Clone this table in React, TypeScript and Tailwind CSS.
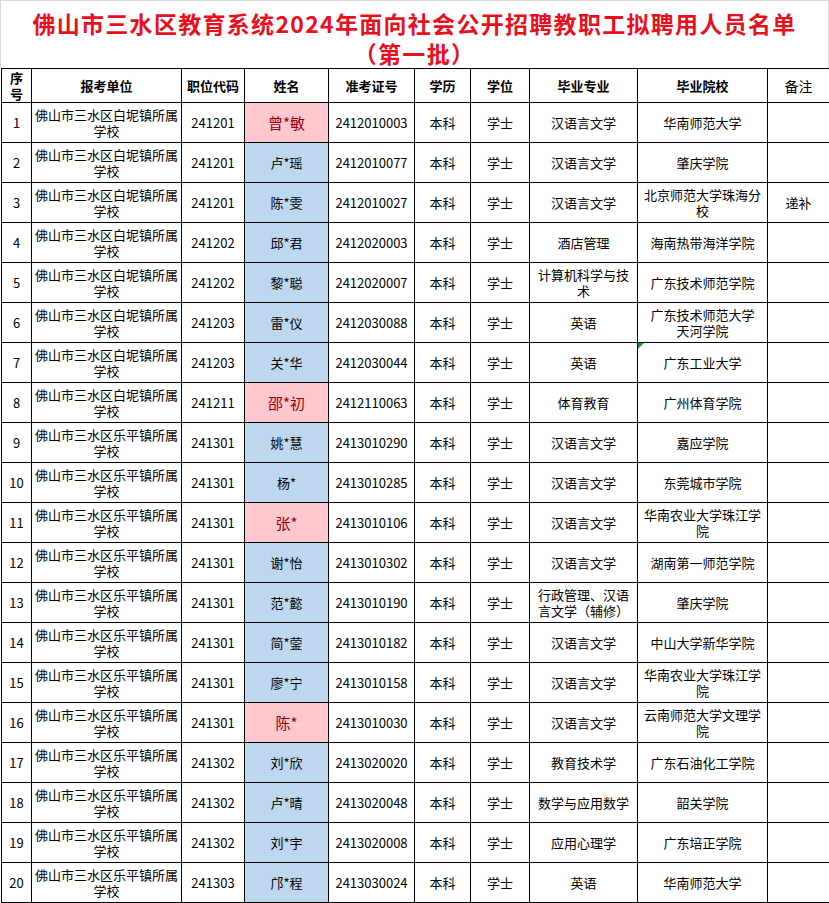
import React from 'react';

type Row = {
  no: number;
  unit: string;
  code: string;
  name: string;
  hit?: boolean;
  ticket: string;
  major: React.ReactNode;
  school: React.ReactNode;
  note?: string;
  flag?: boolean;
};

const BJ = '佛山市三水区白坭镇所属学校';
const LP = '佛山市三水区乐平镇所属学校';

const rows: Row[] = [
  { no: 1, unit: BJ, code: '241201', name: '曾*敏', hit: true, ticket: '2412010003', major: '汉语言文学', school: '华南师范大学' },
  { no: 2, unit: BJ, code: '241201', name: '卢*瑶', ticket: '2412010077', major: '汉语言文学', school: '肇庆学院' },
  { no: 3, unit: BJ, code: '241201', name: '陈*雯', ticket: '2412010027', major: '汉语言文学', school: '北京师范大学珠海分校', note: '递补' },
  { no: 4, unit: BJ, code: '241202', name: '邱*君', ticket: '2412020003', major: '酒店管理', school: '海南热带海洋学院' },
  { no: 5, unit: BJ, code: '241202', name: '黎*聪', ticket: '2412020007', major: '计算机科学与技术', school: '广东技术师范学院' },
  {
    no: 6, unit: BJ, code: '241203', name: '雷*仪', ticket: '2412030088', major: '英语',
    school: (<>广东技术师范大学<br />天河学院</>),
  },
  { no: 7, unit: BJ, code: '241203', name: '关*华', ticket: '2412030044', major: '英语', school: '广东工业大学', flag: true },
  { no: 8, unit: BJ, code: '241211', name: '邵*初', hit: true, ticket: '2412110063', major: '体育教育', school: '广州体育学院' },
  { no: 9, unit: LP, code: '241301', name: '姚*慧', ticket: '2413010290', major: '汉语言文学', school: '嘉应学院' },
  { no: 10, unit: LP, code: '241301', name: '杨*', ticket: '2413010285', major: '汉语言文学', school: '东莞城市学院' },
  { no: 11, unit: LP, code: '241301', name: '张*', hit: true, ticket: '2413010106', major: '汉语言文学', school: '华南农业大学珠江学院' },
  { no: 12, unit: LP, code: '241301', name: '谢*怡', ticket: '2413010302', major: '汉语言文学', school: '湖南第一师范学院' },
  { no: 13, unit: LP, code: '241301', name: '范*懿', ticket: '2413010190', major: '行政管理、汉语言文学（辅修）', school: '肇庆学院' },
  { no: 14, unit: LP, code: '241301', name: '简*蓥', ticket: '2413010182', major: '汉语言文学', school: '中山大学新华学院' },
  { no: 15, unit: LP, code: '241301', name: '廖*宁', ticket: '2413010158', major: '汉语言文学', school: '华南农业大学珠江学院' },
  { no: 16, unit: LP, code: '241301', name: '陈*', hit: true, ticket: '2413010030', major: '汉语言文学', school: '云南师范大学文理学院' },
  { no: 17, unit: LP, code: '241302', name: '刘*欣', ticket: '2413020020', major: '教育技术学', school: '广东石油化工学院' },
  { no: 18, unit: LP, code: '241302', name: '卢*晴', ticket: '2413020048', major: '数学与应用数学', school: '韶关学院' },
  { no: 19, unit: LP, code: '241302', name: '刘*宇', ticket: '2413020008', major: '应用心理学', school: '广东培正学院' },
  { no: 20, unit: LP, code: '241303', name: '邝*程', ticket: '2413030024', major: '英语', school: '华南师范大学' },
];

const cell = 'border border-black text-center align-middle leading-[16px]';

const App = () => {
  return (
    <div
      className="w-[829px] h-[903px] bg-white text-[13px] text-black overflow-hidden"
      style={{ fontFamily: '"Noto Sans CJK SC", "Noto Sans", sans-serif' }}
    >
      {/* Title */}
      <div className="h-[68px] border-t border-l border-r border-[#dadada] pt-[7px] text-center font-bold text-[23px] leading-[30px] tracking-[1.3px] text-[#e8101e]">
        <div>佛山市三水区教育系统2024年面向社会公开招聘教职工拟聘用人员名单</div>
        <div>（第一批）</div>
      </div>

      {/* Table */}
      <table className="table-fixed border-collapse w-[828px] ml-[1px]">
        <colgroup>
          <col className="w-[30px]" />
          <col className="w-[150px]" />
          <col className="w-[63px]" />
          <col className="w-[84px]" />
          <col className="w-[86px]" />
          <col className="w-[56px]" />
          <col className="w-[59px]" />
          <col className="w-[108px]" />
          <col className="w-[130px]" />
          <col className="w-[62px]" />
        </colgroup>
        <thead>
          <tr className="h-[34px] font-bold">
            <th className={`${cell} px-[2px]`}>序号</th>
            <th className={cell}>报考单位</th>
            <th className={cell}>职位代码</th>
            <th className={cell}>姓名</th>
            <th className={cell}>准考证号</th>
            <th className={cell}>学历</th>
            <th className={cell}>学位</th>
            <th className={cell}>毕业专业</th>
            <th className={cell}>毕业院校</th>
            <th className={`${cell} font-normal text-[14px]`}>备注</th>
          </tr>
        </thead>
        <tbody>
          {rows.map((r) => (
            <tr key={r.no} className="h-[40px]">
              <td className={cell}>{r.no}</td>
              <td className={`${cell} px-[2px]`}>{r.unit}</td>
              <td className={cell}>{r.code}</td>
              <td
                className={
                  r.hit
                    ? `${cell} bg-[#ffc7ce] text-[#9c0006] text-[15px]`
                    : `${cell} bg-[#bdd7ee]`
                }
              >
                {r.name}
              </td>
              <td className={cell}>{r.ticket}</td>
              <td className={cell}>本科</td>
              <td className={cell}>学士</td>
              <td className={`${cell} px-[4px]`}>{r.major}</td>
              <td className={`${cell} px-[5px] relative`}>
                {r.flag && (
                  <span className="absolute left-0 top-0 w-0 h-0 border-t-[6px] border-t-[#1a9b3a] border-r-[6px] border-r-transparent" />
                )}
                {r.school}
              </td>
              <td className={cell}>{r.note}</td>
            </tr>
          ))}
        </tbody>
      </table>
    </div>
  );
};

export default App;
